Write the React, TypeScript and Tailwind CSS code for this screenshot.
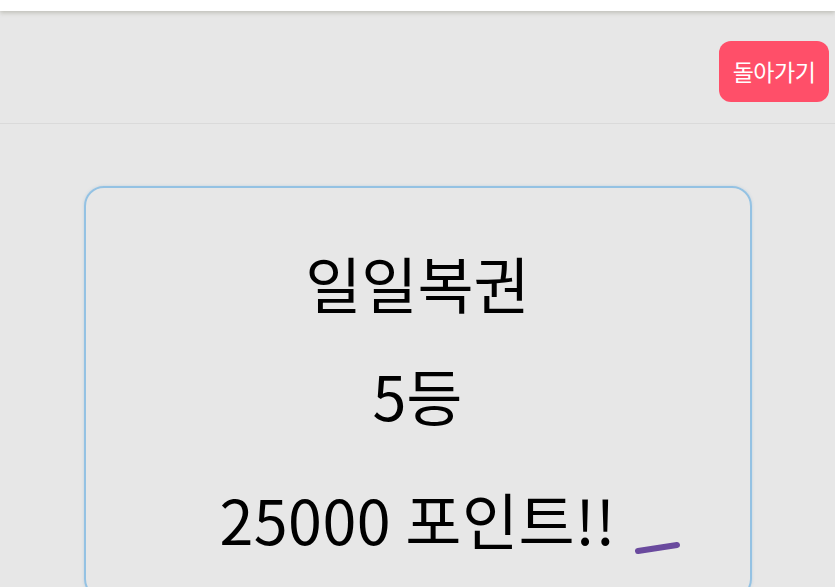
import * as React from "react";

const FONT = { fontFamily: '"Noto Sans CJK KR", "Noto Sans", sans-serif' };

export default function App() {
  return (
    <div className="relative h-[587px] w-[835px] overflow-hidden bg-[#e7e7e7]" style={FONT}>
      <div className="relative z-10 h-[11px] bg-white shadow-[0_2px_4px_rgba(120,120,100,0.35)]" />
      <header className="flex h-[113px] items-center justify-end border-b border-[#dadada] pr-[6px] pt-[9px]">
        <button
          type="button"
          className="h-[61px] w-[110px] rounded-[12px] bg-[#ff4f69] text-[23px] tracking-[-0.5px] text-white"
        >
          돌아가기
        </button>
      </header>
      <main className="pt-[62px]">
        <div className="relative mx-auto w-[668px] rounded-[20px] border-2 border-[#94c2e3] pb-10 text-center text-black shadow-[0_0_3px_rgba(120,170,210,0.35)]">
          <p className="mt-[57px] text-[61px] leading-[76px]">일일복권</p>
          <p className="mt-[36px] text-[61px] leading-[76px]">5등</p>
          <p className="mt-[48px] text-[61px] leading-[76px] tracking-[0.5px]">25000 포인트!!</p>
          <svg
            className="absolute left-[549px] top-[351px]"
            width="48"
            height="16"
            viewBox="0 0 48 16"
          >
            <line x1="3" y1="12" x2="42" y2="6" stroke="#6a4a9e" strokeWidth="6" strokeLinecap="round" />
          </svg>
        </div>
      </main>
    </div>
  );
}
